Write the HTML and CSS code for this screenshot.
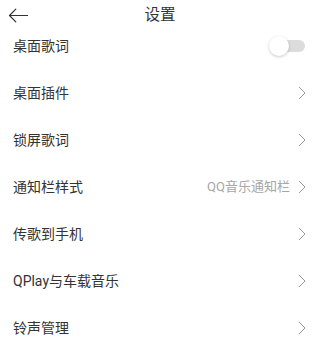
FILE: index.html
```html
<!DOCTYPE html>
<html lang="zh">
<head>
<meta charset="utf-8">
<link rel="stylesheet" href="styles.css">
</head>
<body>
<div class="page">
  <header class="header">
    <svg class="back" width="20" height="15" viewBox="0 0 20 15"><path d="M19.5 7.5H1.5M7.8 1.2L1.5 7.5l6.3 6.3" fill="none" stroke="#333" stroke-width="1.2" stroke-linecap="round" stroke-linejoin="round"/></svg>
    <div class="title">设置</div>
  </header>
  <ul class="list">
    <li class="row"><span class="label">桌面歌词</span><span class="toggle"><span class="knob"></span></span></li>
    <li class="row"><span class="label">桌面插件</span><svg class="chev" width="8" height="14" viewBox="0 0 8 14"><path d="M1 1l6 6-6 6" fill="none" stroke="#999" stroke-width="1"/></svg></li>
    <li class="row"><span class="label">锁屏歌词</span><svg class="chev" width="8" height="14" viewBox="0 0 8 14"><path d="M1 1l6 6-6 6" fill="none" stroke="#999" stroke-width="1"/></svg></li>
    <li class="row"><span class="label">通知栏样式</span><span class="right"><span class="value">QQ音乐通知栏</span><svg class="chev" width="8" height="14" viewBox="0 0 8 14"><path d="M1 1l6 6-6 6" fill="none" stroke="#999" stroke-width="1"/></svg></span></li>
    <li class="row"><span class="label">传歌到手机</span><svg class="chev" width="8" height="14" viewBox="0 0 8 14"><path d="M1 1l6 6-6 6" fill="none" stroke="#999" stroke-width="1"/></svg></li>
    <li class="row"><span class="label">QPlay与车载音乐</span><svg class="chev" width="8" height="14" viewBox="0 0 8 14"><path d="M1 1l6 6-6 6" fill="none" stroke="#999" stroke-width="1"/></svg></li>
    <li class="row"><span class="label">铃声管理</span><svg class="chev" width="8" height="14" viewBox="0 0 8 14"><path d="M1 1l6 6-6 6" fill="none" stroke="#999" stroke-width="1"/></svg></li>
  </ul>
</div>
</body>
</html>
```

FILE: styles.css
```css
html, body {
  margin: 0;
  padding: 0;
  background: #fff;
}
body {
  font-family: Roboto, "Noto Sans CJK SC", sans-serif;
  color: #333;
  width: 317px;
  height: 348px;
  overflow: hidden;
}
.header {
  height: 22px;
  display: grid;
  grid-template-columns: 1fr;
  align-items: start;
  padding-top: 4px;
  box-sizing: border-box;
  overflow: visible;
}
.back {
  grid-area: 1 / 1;
  margin-left: 8px;
  margin-top: 4px;
}
.title {
  grid-area: 1 / 1;
  justify-self: center;
  margin-left: 3px;
  font-size: 15.5px;
  line-height: 22px;
  color: #333;
}
.list {
  list-style: none;
  margin: 0;
  padding: 0;
}
.row {
  height: 47px;
  display: flex;
  align-items: center;
  justify-content: space-between;
  padding: 0 11px 0 13px;
}
.label {
  font-size: 14px;
  line-height: 20px;
  color: #333;
}
.right {
  display: flex;
  align-items: center;
  gap: 8px;
}
.value {
  font-size: 13px;
  color: #a6a6a6;
  line-height: 18px;
}
.chev {
  display: block;
}
.toggle {
  position: relative;
  width: 33px;
  height: 12px;
  border-radius: 6px;
  background: #dcdcdc;
  margin-right: 1px;
}
.knob {
  position: absolute;
  left: -3px;
  top: -4px;
  width: 20px;
  height: 20px;
  border-radius: 50%;
  background: #fff;
  box-shadow: 0 1px 3px rgba(0,0,0,0.22);
}
```
